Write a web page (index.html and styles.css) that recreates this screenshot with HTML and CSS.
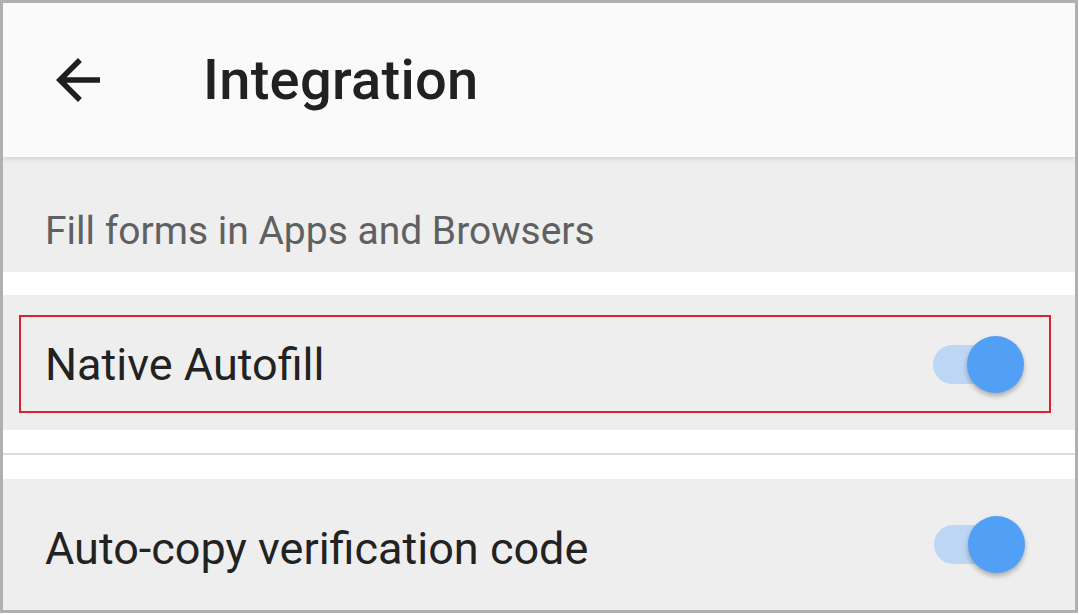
FILE: index.html
```html
<!DOCTYPE html>
<html>
<head>
<meta charset="utf-8">
<link rel="stylesheet" href="styles.css">
</head>
<body>
<div class="frame">
  <header class="appbar">
    <svg class="back" viewBox="0 0 24 24" width="66" height="66"><path d="M20 11H7.83l5.59-5.59L12 4l-8 8 8 8 1.41-1.41L7.83 13H20v-2z" fill="#1f1f1f"/></svg>
    <h1 class="title">Integration</h1>
  </header>
  <div class="section-head">Fill forms in Apps and Browsers</div>
  <div class="gap"></div>
  <div class="row row-first">
    <div class="highlight">
      <span class="label">Native Autofill</span>
      <span class="switch"><span class="track"></span><span class="thumb"></span></span>
    </div>
  </div>
  <div class="gap"></div>
  <div class="divider"></div>
  <div class="gap gap-b"></div>
  <div class="row row-second">
    <span class="label">Auto-copy verification code</span>
    <span class="switch"><span class="track"></span><span class="thumb"></span></span>
  </div>
</div>
</body>
</html>
```

FILE: styles.css
```css
html, body {
  margin: 0;
  padding: 0;
  background: #ffffff;
}
body {
  font-family: Roboto, "Noto Sans", sans-serif;
  width: 1079px;
  height: 615px;
  overflow: hidden;
}
.frame {
  box-sizing: border-box;
  width: 1078px;
  height: 613px;
  border: 3px solid #aeb0b2;
  background: #ffffff;
  display: flex;
  flex-direction: column;
  overflow: hidden;
}
.appbar {
  position: relative;
  z-index: 1;
  height: 154px;
  flex: none;
  background: #fafafa;
  box-shadow: 0 2px 5px rgba(0,0,0,0.12);
  display: flex;
  align-items: center;
}
.back {
  margin-left: 42px;
  flex: none;
}
.title {
  margin: 0 0 0 92px;
  font-size: 56px;
  font-weight: 500;
  color: #212121;
  letter-spacing: 0.3px;
}
.section-head {
  height: 115px;
  flex: none;
  background: #eeeeee;
  box-sizing: border-box;
  padding: 0 0 18px 42px;
  display: flex;
  align-items: flex-end;
  font-size: 39px;
  color: #5f6062;
}
.gap {
  height: 23px;
  flex: none;
  background: #ffffff;
}
.gap-b {
  height: 24px;
}
.divider {
  height: 2px;
  flex: none;
  background: #dcdcdc;
}
.row {
  flex: none;
  background: #eeeeee;
  display: flex;
  align-items: center;
  box-sizing: border-box;
}
.row-first {
  height: 135px;
  padding: 20px 24px 17px 16px;
}
.highlight {
  flex: 1;
  height: 98px;
  box-sizing: border-box;
  border: 2px solid #d8232e;
  display: flex;
  align-items: center;
  justify-content: space-between;
  padding: 0 25px 0 24px;
}
.row-second {
  flex: 1;
  justify-content: space-between;
  padding: 0 50px 0 42px;
}
.row-second .label {
  padding-top: 7px;
}
.label {
  font-size: 45px;
  color: #222222;
}
.switch {
  position: relative;
  width: 91px;
  height: 57px;
  flex: none;
}
.track {
  position: absolute;
  left: 0;
  top: 9px;
  width: 86px;
  height: 39px;
  border-radius: 20px;
  background: #bdd6f4;
}
.thumb {
  position: absolute;
  right: 0;
  top: 0;
  width: 57px;
  height: 57px;
  border-radius: 50%;
  background: #529ff6;
  box-shadow: 0 3px 5px rgba(0,0,0,0.28);
}
```
